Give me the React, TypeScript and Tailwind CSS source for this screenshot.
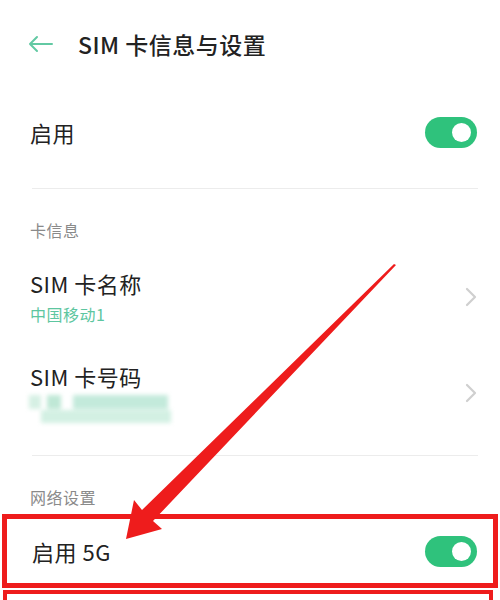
import React from 'react';

const Toggle: React.FC = () => (
  <div className="w-[52px] h-[31px] rounded-full bg-[#2fc27c] flex items-center justify-end pr-[6px]">
    <div className="w-[19px] h-[19px] rounded-full bg-white" />
  </div>
);

const Chevron: React.FC = () => (
  <svg width="14" height="20" viewBox="0 0 14 20" fill="none">
    <path d="M3 2 L11 10 L3 18" stroke="#cfcfcf" strokeWidth="2.2" strokeLinecap="round" strokeLinejoin="round" />
  </svg>
);

const App: React.FC = () => {
  return (
    <div
      className="relative w-[500px] h-[600px] overflow-hidden bg-white"
      style={{ fontFamily: '"Noto Sans CJK SC", "Noto Sans", sans-serif' }}
    >
      {/* header */}
      <div className="h-[88px] flex items-center pl-[28px]">
        <svg width="25" height="18" viewBox="0 0 25 18" fill="none">
          <path d="M24 9 H2 M9 2 L2 9 L9 16" stroke="#62c9a3" strokeWidth="2" strokeLinecap="round" strokeLinejoin="round" />
        </svg>
        <span className="ml-[25px] text-[23px] tracking-[0.5px] font-medium text-[#222]">SIM 卡信息与设置</span>
      </div>

      {/* 启用 */}
      <div className="h-[88px] flex items-center justify-between pl-[30px] pr-[23px]">
        <span className="text-[22px] tracking-[0.5px] text-[#222]">启用</span>
        <Toggle />
      </div>
      <div className="mt-[12px] ml-[32px] mr-[22px] h-px bg-[#ececec]" />

      {/* 卡信息 */}
      <div className="mt-[30px] pl-[30px] text-[16px] tracking-[0.5px] leading-[22px] text-[#8a8a8a]">卡信息</div>

      <div className="mt-[28px] flex items-center justify-between pl-[30px] pr-[22px]">
        <div className="flex flex-col">
          <span className="text-[22px] tracking-[0.5px] leading-[28px] text-[#222]">SIM 卡名称</span>
          <span className="mt-[6px] text-[16px] tracking-[0.5px] leading-[22px] text-[#5dc6a0]">中国移动1</span>
        </div>
        <Chevron />
      </div>

      <div className="mt-[37px] flex items-center justify-between pl-[30px] pr-[22px]">
        <div className="flex flex-col">
          <span className="text-[22px] tracking-[0.5px] leading-[28px] text-[#222]">SIM 卡号码</span>
          <div className="mt-[5px] -ml-[3px] h-[28px] w-[150px] flex flex-col gap-[1px] blur-[2px]">
            <div className="flex gap-[6px] h-[14px] pl-[2px]">
              <div className="w-[12px] bg-[#d6f0e4]" />
              <div className="w-[14px] bg-[#bfe8d6]" />
              <div className="w-[95px] ml-[6px] bg-[#c3eadb]" />
            </div>
            <div className="h-[13px] ml-[14px] w-[130px] bg-[#d3f0e3]" />
          </div>
        </div>
        <Chevron />
      </div>

      <div className="mt-[32px] ml-[32px] mr-[22px] h-px bg-[#ececec]" />

      {/* 网络设置 */}
      <div className="mt-[30px] pl-[30px] text-[16px] tracking-[0.5px] leading-[22px] text-[#8a8a8a]">网络设置</div>

      <div className="mt-[6px] mx-[2px] h-[74px] border-[5px] border-[#ee1c1c] flex items-center justify-between pl-[25px] pr-[16px]">
        <span className="text-[22px] tracking-[0.5px] text-[#222]">启用 5G</span>
        <Toggle />
      </div>
      <div className="mt-[2px] ml-[3px] mr-[7px] h-[40px] border-x-[4px] border-t-[4px] border-[#ee1c1c]" />

      {/* annotation arrow */}
      <svg className="absolute left-0 top-0 pointer-events-none" width="500" height="600" viewBox="0 0 500 600">
        <polygon
          points="396,265 153,521 162,529 126,539 134,500 142,510 394,264"
          fill="#ee1c1c"
        />
      </svg>
    </div>
  );
};

export default App;
